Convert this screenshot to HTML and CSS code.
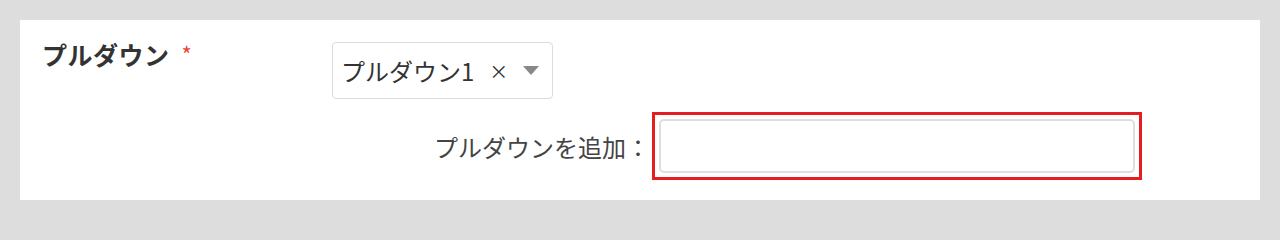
FILE: index.html
```html
<!DOCTYPE html>
<html lang="ja">
<head>
<meta charset="utf-8">
<link rel="stylesheet" href="styles.css">
</head>
<body>
<div class="panel">
  <div class="field">
    <div class="label">プルダウン<span class="req">*</span></div>
    <div class="control">
      <div class="select">
        <span class="value">プルダウン1</span>
        <span class="clear">×</span>
        <span class="arrow"></span>
      </div>
      <div class="add-row">
        <span class="add-label">プルダウンを追加：</span>
        <div class="highlight"><input class="add-input" type="text"></div>
      </div>
    </div>
  </div>
</div>
</body>
</html>
```
FILE: styles.css
```css
* { box-sizing: border-box; }
html { background: #dddddd; }
html, body { margin: 0; padding: 0; }
body {
  width: 1280px;
  height: 220px;
  background: #dddddd;
  padding: 20px;
  font-family: "Noto Sans CJK JP", "Noto Sans", sans-serif;
  color: #333;
  overflow: hidden;
}
.panel {
  background: #fff;
  width: 1240px;
  height: 180px;
  padding: 18px 20px 0 22px;
}
.field {
  display: flex;
}
.label {
  width: 290px;
  font-size: 25px;
  font-weight: bold;
  line-height: 32px;
  letter-spacing: 0.5px;
  color: #333;
}
.req {
  color: #e8453c;
  font-size: 22px;
  font-weight: normal;
  margin-left: 12px;
  vertical-align: top;
  position: relative;
  top: -1px;
}
.control {
  flex: 1;
  display: flex;
  flex-direction: column;
  padding-top: 4px;
}
.select {
  align-self: flex-start;
  display: flex;
  align-items: center;
  width: 221px;
  height: 57px;
  border: 1px solid #dcdcdc;
  border-radius: 4px;
  padding: 0 0 0 8px;
  font-size: 24px;
  color: #333;
}
.value { line-height: 1; }
.clear {
  margin-left: 15px;
  font-size: 19px;
  line-height: 1;
  color: #333;
}
.arrow {
  margin-left: 15px;
  width: 0;
  height: 0;
  border-left: 8px solid transparent;
  border-right: 8px solid transparent;
  border-top: 9px solid #888;
}
.add-row {
  display: flex;
  align-items: center;
  margin-top: 13px;
  margin-left: 102px;
}
.add-label {
  font-size: 24px;
  color: #444;
  margin-right: 2px;
}
.highlight {
  border: 3px solid #e41e1e;
  padding: 4px;
  width: 490px;
  height: 68px;
}
.add-input {
  display: block;
  width: 100%;
  height: 100%;
  border: 2px solid #dedede;
  border-radius: 5px;
  outline: none;
  margin: 0;
  background: #fff;
}
```
